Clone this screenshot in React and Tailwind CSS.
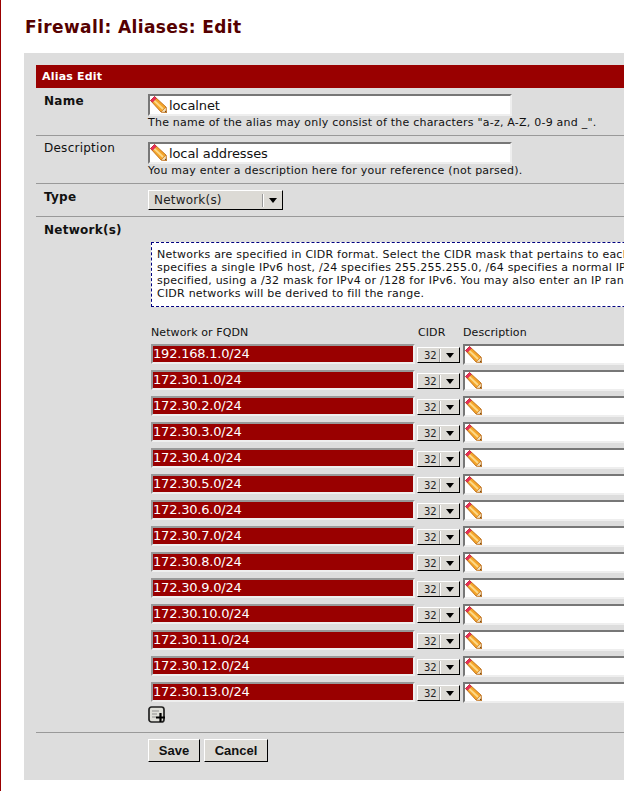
import React from 'react';

const networks = [
  '192.168.1.0/24',
  '172.30.1.0/24',
  '172.30.2.0/24',
  '172.30.3.0/24',
  '172.30.4.0/24',
  '172.30.5.0/24',
  '172.30.6.0/24',
  '172.30.7.0/24',
  '172.30.8.0/24',
  '172.30.9.0/24',
  '172.30.10.0/24',
  '172.30.11.0/24',
  '172.30.12.0/24',
  '172.30.13.0/24',
];

const Pencil = () => (
  <svg width="17" height="17" viewBox="0 0 17 17" className="shrink-0">
    <path d="M0.5 4.5 L4.5 0.5 L16 11 L16.5 16.5 L11 16 Z" fill="#f4a52a" stroke="#b8620a" strokeWidth="0.8" strokeLinejoin="round" />
    <path d="M4 4.5 L13 13" stroke="#fcd98a" strokeWidth="1.8" />
    <path d="M11 16 L16 11 L16.5 16.5 Z" fill="#f3dfb8" stroke="#b8620a" strokeWidth="0.5" />
    <path d="M14.8 15.6 L16.5 16.5 L15.7 14.6 Z" fill="#5a3000" />
    <path d="M0.5 4.5 L4.5 0.5 L6.4 2.3 L2.4 6.3 Z" fill="#ea2d5c" stroke="#b01840" strokeWidth="0.5" />
  </svg>
);

const TextField = ({ value, className }) => (
  <div className={`flex items-start h-[22px] bg-white border-2 border-t-[#777777] border-l-[#777777] border-r-[#eeeeee] border-b-[#eeeeee] ${className}`}>
    <Pencil />
    <span className="ml-[2px] text-[13px] tracking-[-0.1px] leading-[19px] text-[#111111]">{value}</span>
  </div>
);

const Arrow = () => (
  <svg width="8" height="5" viewBox="0 0 8 5">
    <path d="M0 0 H8 L4 5 Z" fill="#000000" />
  </svg>
);

const SelectBox = ({ label, className, text }) => (
  <div className={`flex items-center bg-[#dcdad5] border border-t-white border-l-white border-r-black border-b-black ${className}`}>
    <span className={`flex-1 text-[#222222] ${text}`}>{label}</span>
    <span className="w-px h-[13px] bg-white border-l border-[#999999] box-content"></span>
    <span className="w-[18px] flex justify-center"><Arrow /></span>
  </div>
);

const NetworkRow = ({ value }) => (
  <div className="flex items-start h-[26px]">
    <div className="w-[264px] h-[20px] bg-[#990000] border-2 border-t-[#999999] border-l-[#999999] border-r-[#eeeeee] border-b-[#eeeeee] shrink-0 text-white text-[13px] tracking-[-0.2px] leading-[16px]">
      {value}
    </div>
    <SelectBox label="32" className="ml-[2px] mt-[3px] w-[43px] h-[16px] shrink-0" text="text-[10px] pl-[6px]" />
    <div className="ml-[3px] w-[200px] h-[21px] bg-white border-2 border-t-[#777777] border-l-[#777777] border-r-[#eeeeee] border-b-[#eeeeee] shrink-0">
      <Pencil />
    </div>
  </div>
);

const Row = ({ label, bold, children, className }) => (
  <div className={`flex border-b border-[#999999] ${className}`}>
    <div className={`w-[112px] pl-2 shrink-0 text-[12px] tracking-[0.25px] leading-[15px] text-[#111111] ${bold ? 'font-bold' : ''}`}>{label}</div>
    <div className="flex-1">{children}</div>
  </div>
);

export default function App() {
  return (
    <div className="w-[624px] h-[791px] overflow-hidden bg-white border-l border-[#990000] pl-[23px] pt-[17px] font-['DejaVu_Sans',sans-serif]">
      <h1 className="ml-px text-[17px] tracking-[0.4px] leading-[20px] font-bold text-[#550000]">Firewall: Aliases: Edit</h1>
      <div className="mt-[16px] w-[800px] h-[727px] bg-[#dddddd] pl-3 pt-3">
        <div className="h-[23px] bg-[#990000] pl-[6px] text-white text-[11px] tracking-[0.2px] font-bold leading-[23px]">Alias Edit</div>
        <Row label="Name" bold className="h-[48px] pt-[6px]">
          <TextField value="localnet" className="w-[364px]" />
          <p className="text-[11px] tracking-[0.22px] leading-[13px] text-[#111111]">The name of the alias may only consist of the characters "a-z, A-Z, 0-9 and _".</p>
        </Row>
        <Row label="Description" className="h-[48px] pt-[5px]">
          <div className="pt-px">
            <TextField value="local addresses" className="w-[364px]" />
          </div>
          <p className="text-[11px] tracking-[0.22px] leading-[13px] text-[#111111]">You may enter a description here for your reference (not parsed).</p>
        </Row>
        <Row label="Type" bold className="h-[33px] pt-[6px]">
          <SelectBox label="Network(s)" className="w-[135px] h-[20px]" text="text-[12px] tracking-[0.2px] pl-[5px]" />
        </Row>
        <Row label="Network(s)" bold className="h-[516px] pt-[6px]">
          <div className="ml-[3px] mt-[19px] w-[640px] h-[65px] bg-white border border-dashed border-[#000080] pt-[5px] pl-[5px] text-[11px] tracking-[0.22px] leading-[13px] text-[#111111] whitespace-nowrap">
            <p>Networks are specified in CIDR format. Select the CIDR mask that pertains to each entry. /32 specifies a single IPv4 host, /128</p>
            <p>specifies a single IPv6 host, /24 specifies 255.255.255.0, /64 specifies a normal IPv6 network, etc. If no subnet mask is</p>
            <p>specified, using a /32 mask for IPv4 or /128 for IPv6. You may also enter an IP range such as 192.168.1.1-192.168.1.254 and a list of</p>
            <p>CIDR networks will be derived to fill the range.</p>
          </div>
          <div className="ml-[3px] mt-[19px] flex h-[18px] text-[11px] tracking-[0.1px] leading-[13px] text-[#111111]">
            <span className="w-[267px]">Network or FQDN</span>
            <span className="w-[45px]">CIDR</span>
            <span>Description</span>
          </div>
          <div className="ml-[3px]">
            {networks.map((n) => (
              <NetworkRow key={n} value={n} />
            ))}
          </div>
          <svg width="18" height="18" viewBox="0 0 18 18" className="-mt-[2px]">
            <rect x="1" y="1" width="15" height="15" rx="2.5" fill="#e0e0da" stroke="#222222" strokeWidth="1.7" />
            <path d="M4 5 H11 M4 8 H9 M4 11 H8" stroke="#8f8f8f" strokeWidth="1" />
            <path d="M12.5 7 V16 M8 11.5 H17" stroke="#000000" strokeWidth="2.2" />
          </svg>
        </Row>
        <div className="flex gap-[4px] pl-[112px] pt-[6px]">
          <button className="w-[52px] h-[23px] bg-[#dcdad5] border border-t-white border-l-white border-r-black border-b-black text-[13px] font-bold font-['Liberation_Sans',sans-serif] text-[#111111]">Save</button>
          <button className="w-[64px] h-[23px] bg-[#dcdad5] border border-t-white border-l-white border-r-black border-b-black text-[13px] font-bold font-['Liberation_Sans',sans-serif] text-[#111111]">Cancel</button>
        </div>
      </div>
    </div>
  );
}
